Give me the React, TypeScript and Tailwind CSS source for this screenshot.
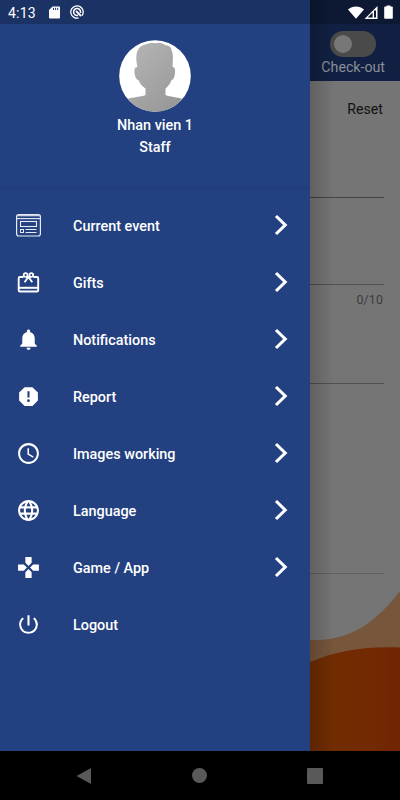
import type { ReactNode } from 'react';
import {
  MdAccessTime,
  MdGamepad,
  MdLanguage,
  MdNotifications,
  MdPowerSettingsNew,
  MdReport,
} from 'react-icons/md';

interface MenuItem {
  label: string;
  icon: ReactNode;
  hasArrow: boolean;
}

function EventIcon() {
  return (
    <svg width="25" height="23" viewBox="0 0 25 23" fill="none" stroke="#e8ecf5">
      <rect x="0.6" y="0.6" width="23.8" height="21.4" rx="2.2" strokeWidth="1.2" />
      <path d="M1 1.6H24" strokeWidth="1.4" stroke="#cbd2e4" />
      <path d="M1 4.6H24" strokeWidth="1.1" />
      <rect x="4.5" y="7.5" width="16" height="5" strokeWidth="1.1" />
      <rect x="4.5" y="15.5" width="3" height="3" strokeWidth="1" />
      <path d="M9.5 15.5H20.5M9.5 18.5H20.5" strokeWidth="1" />
    </svg>
  );
}

function GiftIcon() {
  return (
    <svg width="25" height="25" viewBox="0 0 25 25" fill="none" stroke="currentColor">
      <path
        d="M7.5 7H4Q2.7 7 2.7 8.300V20.200Q2.700 21.500 4 21.500H20.900Q22.200 21.500 22.200 20.200V8.300Q22.200 7 20.900 7H17.300"
        strokeWidth="1.900"
      />
      <path d="M2.7 17.8H22.2" strokeWidth="2" />
      <circle cx="9.6" cy="5.1" r="1.9" strokeWidth="1.7" />
      <circle cx="15.3" cy="5.1" r="1.9" strokeWidth="1.7" />
      <path d="M8.5 12.3L12.4 7L16.3 12.3M10 7H15" strokeWidth="1.9" />
    </svg>
  );
}

const items: MenuItem[] = [
  { label: 'Current event', icon: <EventIcon />, hasArrow: true },
  { label: 'Gifts', icon: <GiftIcon />, hasArrow: true },
  { label: 'Notifications', icon: <MdNotifications size={25} />, hasArrow: true },
  { label: 'Report', icon: <MdReport size={25} />, hasArrow: true },
  { label: 'Images working', icon: <MdAccessTime size={25} />, hasArrow: true },
  { label: 'Language', icon: <MdLanguage size={25} />, hasArrow: true },
  { label: 'Game / App', icon: <MdGamepad size={25} />, hasArrow: true },
  { label: 'Logout', icon: <MdPowerSettingsNew size={25} />, hasArrow: false },
];

function StatusBar() {
  return (
    <div className="absolute inset-x-0 top-0 z-10 flex h-6 items-center bg-black/22 pl-2 pr-[7px] text-white">
      <span className="w-[41px] pt-[2px] text-[14px] leading-6 tracking-[0.2px]">4:13</span>
      <svg width="11" height="13" viewBox="0 0 11 13">
        <path d="M3.6 0.5H10a1 1 0 0 1 1 1V11.5a1 1 0 0 1-1 1H1a1 1 0 0 1-1-1V4z" fill="#fff" />
        <path d="M4.5 1.8V4M6.6 1.8V4M8.7 1.8V4" stroke="#1b3264" strokeWidth="1" />
      </svg>
      <svg className="ml-[10px]" width="14" height="14" viewBox="0 0 14 14" fill="none" stroke="#fff">
        <circle cx="7" cy="7" r="6.2" strokeWidth="1.3" strokeDasharray="34 5" transform="rotate(75 7 7)" />
        <path d="M8 10.3A3.5 3.5 0 1 1 10.4 8" strokeWidth="1.5" />
        <path d="M6 6L11 11" strokeWidth="1.8" />
      </svg>
      <div className="ml-auto flex items-center">
        <svg width="16" height="13" viewBox="0 0 16 13" fill="#fff">
          <path d="M0 3.5C4.5 -0.4 11.5 -0.4 16 3.5L8 12.8z" />
        </svg>
        <svg width="14" height="13" viewBox="0 0 14 13">
          <path d="M13.5 0V13H0.5z" fill="#fff" />
          <path d="M8.6 6.6V11.6H3.7z" fill="#0d1832" />
          <path d="M10 4.5H12V11.5H10z" fill="#0d1832" />
        </svg>
        <svg className="ml-[6px]" width="9" height="14" viewBox="0 0 9 14" fill="#fff">
          <path d="M2.6 0.4H6.4V1.6H8a.8.8 0 0 1 .8.8V13a.8.8 0 0 1-.8.8H1a.8.8 0 0 1-.8-.8V2.4a.8.8 0 0 1 .8-.8H2.6z" />
        </svg>
      </div>
    </div>
  );
}

function Avatar() {
  return (
    <svg className="mt-10" width="72" height="72" viewBox="0 0 72 72">
      <defs>
        <linearGradient id="person" x1="0" y1="0" x2="1" y2="1">
          <stop offset="0" stopColor="#b9b9b9" />
          <stop offset="1" stopColor="#929292" />
        </linearGradient>
        <clipPath id="round">
          <circle cx="36" cy="36" r="35.8" />
        </clipPath>
      </defs>
      <circle cx="36" cy="36" r="35.8" fill="#fff" />
      <path
        clipPath="url(#round)"
        fill="url(#person)"
        d="M18.5 27C17 21 16.5 13 19.5 9C21.5 5.5 25 5 28 4C31 2.5 34 3 37 3.2C40 2 44 3 46.5 5.2C49.5 5 53 7.5 52.5 10.5C54.5 13 54 20 53.5 27C56.5 26.5 56.5 32 55.5 36C54.5 39.5 53.5 40 52.5 40C51 44 49.5 46 46.5 48.5V55C51 57 58 57 63.5 59L72 72H0L8.5 59C14 57 22 57 26.5 55V48.5C23 46 21 44 19.5 40C18 40 17 39 16 35.5C15 31 15 26.5 18.5 27Z"
      />
    </svg>
  );
}

function Drawer() {
  return (
    <aside className="flex w-[310px] shrink-0 flex-col bg-[#234080] text-white">
      <div className="flex h-[189px] flex-col items-center border-b border-[#213b77] text-[14.4px] font-medium">
        <Avatar />
        <p className="mt-[3px] leading-[21px]">Nhan vien 1</p>
        <p className="leading-[23px]">Staff</p>
      </div>
      <nav className="pt-2">
        {items.map((item) => (
          <div key={item.label} className="flex h-[57px] items-center pl-4 pr-[22px]">
            <span className="flex w-[57px]">{item.icon}</span>
            <span className="pt-[2px] text-[14.4px] font-medium">{item.label}</span>
            {item.hasArrow && (
              <svg className="mb-px ml-auto" width="14" height="22" viewBox="0 0 14 22" fill="none">
                <path d="M2 2L11.2 11L2 20" stroke="#fff" strokeWidth="3.1" />
              </svg>
            )}
          </div>
        ))}
      </nav>
    </aside>
  );
}

// Page behind the drawer, already dimmed
function DimmedPage() {
  return (
    <main className="relative flex min-w-0 flex-1 flex-col bg-[#757575]">
      <header className="flex h-[81px] flex-col items-end bg-[#112042] pr-[15px] pt-[31px] text-[#8b8f98]">
        <div className="mr-[9px] flex h-[26px] w-[46px] items-center rounded-full bg-[#4a4a4a] pl-1">
          <div className="size-[18px] rounded-full bg-[#777777]" />
        </div>
        <span className="text-[14.2px] leading-[20px]">Check-out</span>
      </header>
      <div className="flex h-[492px] flex-col pr-4 text-right">
        <div className="h-[116px] pr-px pt-[18px] text-[14.2px] leading-[21px] text-[#111]">Reset</div>
        <div className="h-[87px] border-t border-[#444]" />
        <div className="h-[99px] border-t border-[#505050] pr-px pt-[6px] text-[12.3px] leading-[18px] tracking-[0.2px] text-[#3b3b3b]">
          0/10
        </div>
        <div className="h-[190px] border-t border-[#505050]" />
      </div>
      <div className="flex-1 pr-4">
        <div className="border-t border-[#5f5f5f]" />
      </div>
      <svg className="absolute bottom-0 left-0" width="90" height="161" viewBox="0 0 90 161">
        <defs>
          <linearGradient id="wave">
            <stop offset="0" stopColor="#702d02" />
            <stop offset="0.7" stopColor="#722a02" />
            <stop offset="1" stopColor="#732302" />
          </linearGradient>
        </defs>
        <path d="M0 50C34 51 61 39 90 1V161H0z" fill="#77563c" />
        <path d="M0 72C28 60 58 56 90 57.5V161H0z" fill="url(#wave)" />
      </svg>
      <div className="absolute inset-y-0 left-0 w-6 bg-linear-to-r from-black/18 to-transparent" />
    </main>
  );
}

function NavigationBar() {
  return (
    <div className="flex h-[49px] items-center justify-between bg-black pl-[76px] pr-[77px]">
      <svg width="15" height="18" viewBox="0 0 15 18" fill="#595959">
        <path d="M15 1V17L0.5 9z" />
      </svg>
      <div className="size-[15px] rounded-full bg-[#595959]" />
      <div className="size-4 rounded-[1px] bg-[#595959]" />
    </div>
  );
}

export default function App() {
  return (
    <div className="relative flex h-[800px] w-[400px] flex-col overflow-hidden font-[Roboto,sans-serif]">
      <StatusBar />
      <div className="flex h-[751px]">
        <Drawer />
        <DimmedPage />
      </div>
      <NavigationBar />
    </div>
  );
}
